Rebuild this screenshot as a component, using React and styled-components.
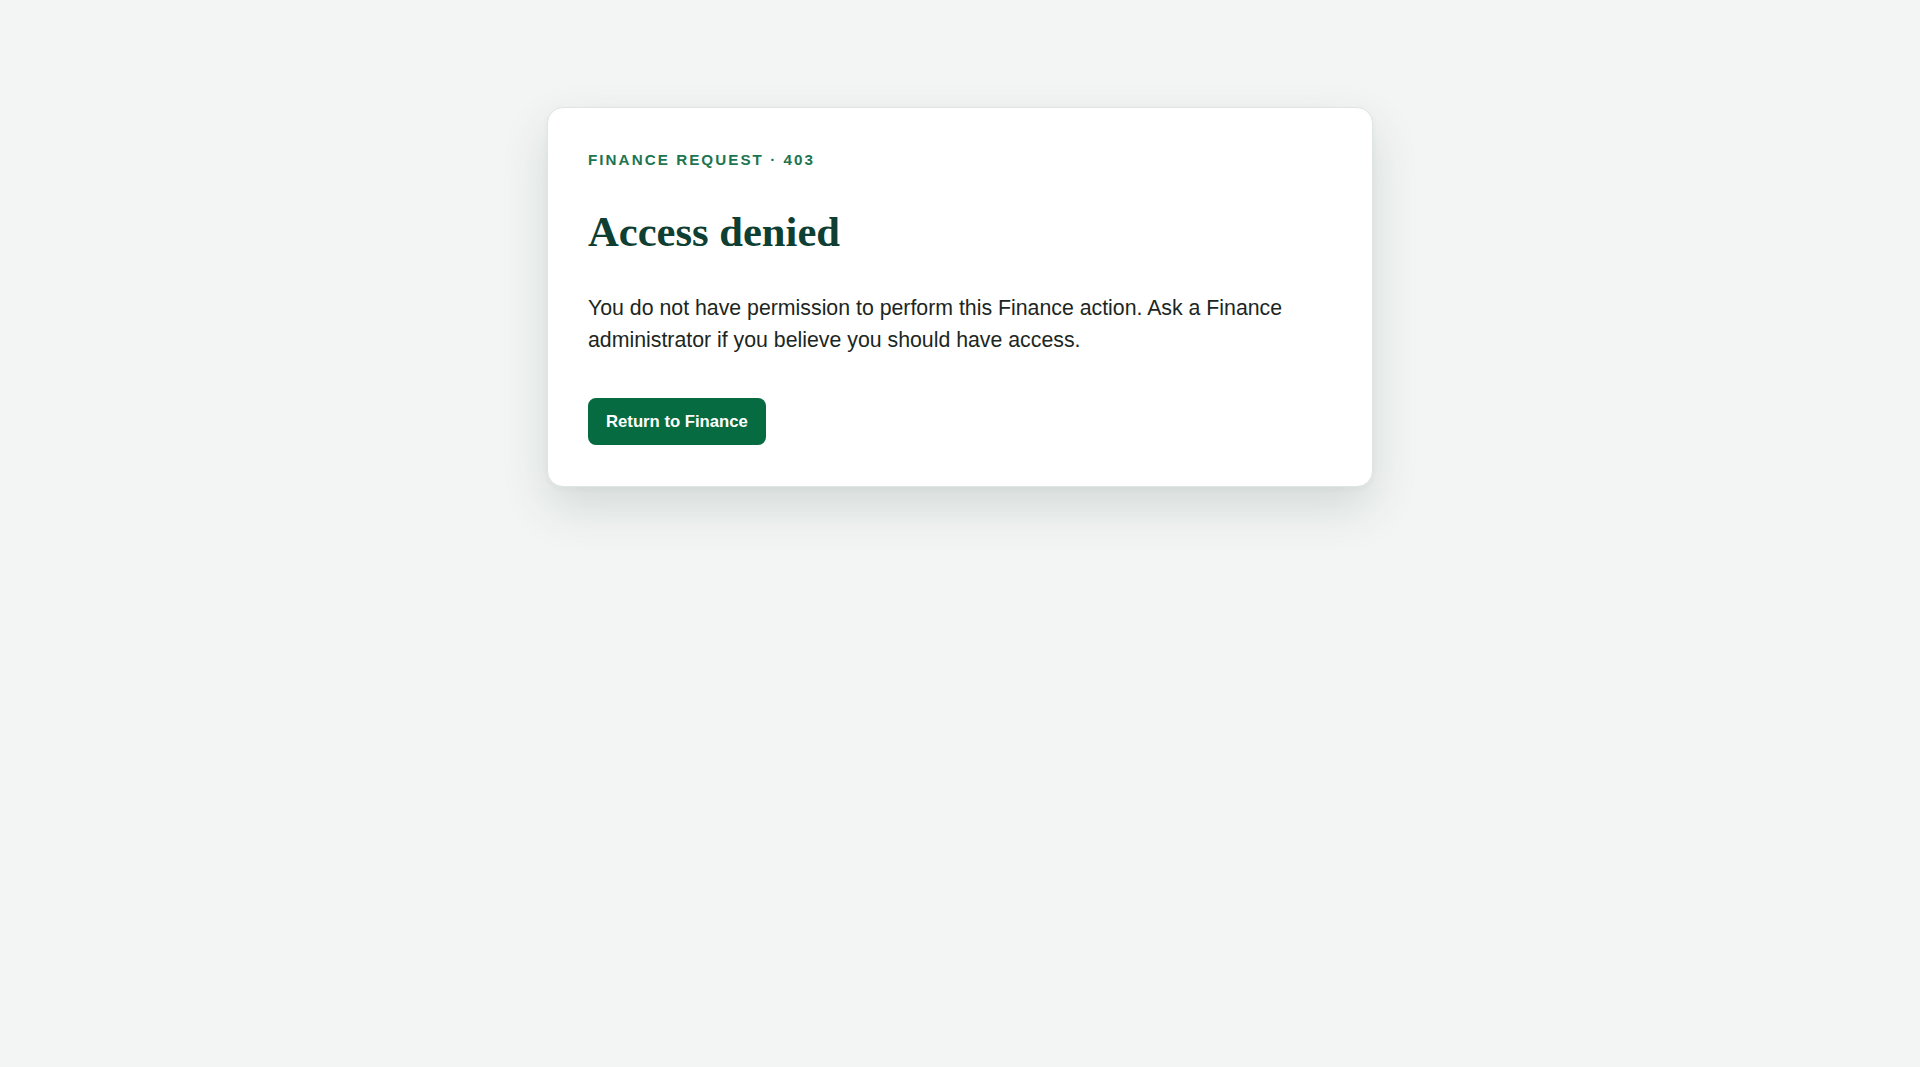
import React from "react";
import styled, { createGlobalStyle } from "styled-components";

const GlobalStyle = createGlobalStyle`
  html, body {
    margin: 0;
    padding: 0;
    background: #f3f5f4;
  }
  body {
    font-family: "Liberation Sans", Arial, sans-serif;
    -webkit-font-smoothing: antialiased;
  }
`;

const Page = styled.main`
  min-height: 100vh;
  box-sizing: border-box;
  padding-top: 107px;
  display: flex;
  justify-content: center;
  align-items: flex-start;
`;

const Card = styled.section`
  width: 826px;
  box-sizing: border-box;
  padding: 42px 40px 41px;
  background: #ffffff;
  border: 1px solid #dfe5e2;
  border-radius: 16px;
  box-shadow: 0 20px 48px rgba(18, 58, 44, 0.14), 0 2px 6px rgba(18, 58, 44, 0.04);
`;

const Eyebrow = styled.div`
  font-size: 15.2px;
  line-height: 20px;
  font-weight: 700;
  letter-spacing: 0.135em;
  text-transform: uppercase;
  color: #1c7550;
`;

const Heading = styled.h1`
  margin: 37px 0 0;
  font-family: "Liberation Serif", "Times New Roman", serif;
  font-size: 42.6px;
  line-height: 50px;
  font-weight: 700;
  color: #0f3f33;
`;

const Message = styled.p`
  margin: 35px 0 0;
  max-width: 730px;
  font-size: 21.3px;
  line-height: 32px;
  color: #1c2622;
`;

const Actions = styled.div`
  margin-top: 42px;
  display: flex;
`;

const Button = styled.a`
  display: inline-block;
  padding: 14px 18px;
  border-radius: 8px;
  background: #066b40;
  color: #ffffff;
  font-size: 16.7px;
  line-height: 19px;
  font-weight: 700;
  text-decoration: none;
  cursor: pointer;
`;

export default function App() {
  return (
    <>
      <GlobalStyle />
      <Page>
        <Card>
          <Eyebrow>Finance request · 403</Eyebrow>
          <Heading>Access denied</Heading>
          <Message>
            You do not have permission to perform this Finance action. Ask a
            Finance administrator if you believe you should have access.
          </Message>
          <Actions>
            <Button href="#finance">Return to Finance</Button>
          </Actions>
        </Card>
      </Page>
    </>
  );
}
